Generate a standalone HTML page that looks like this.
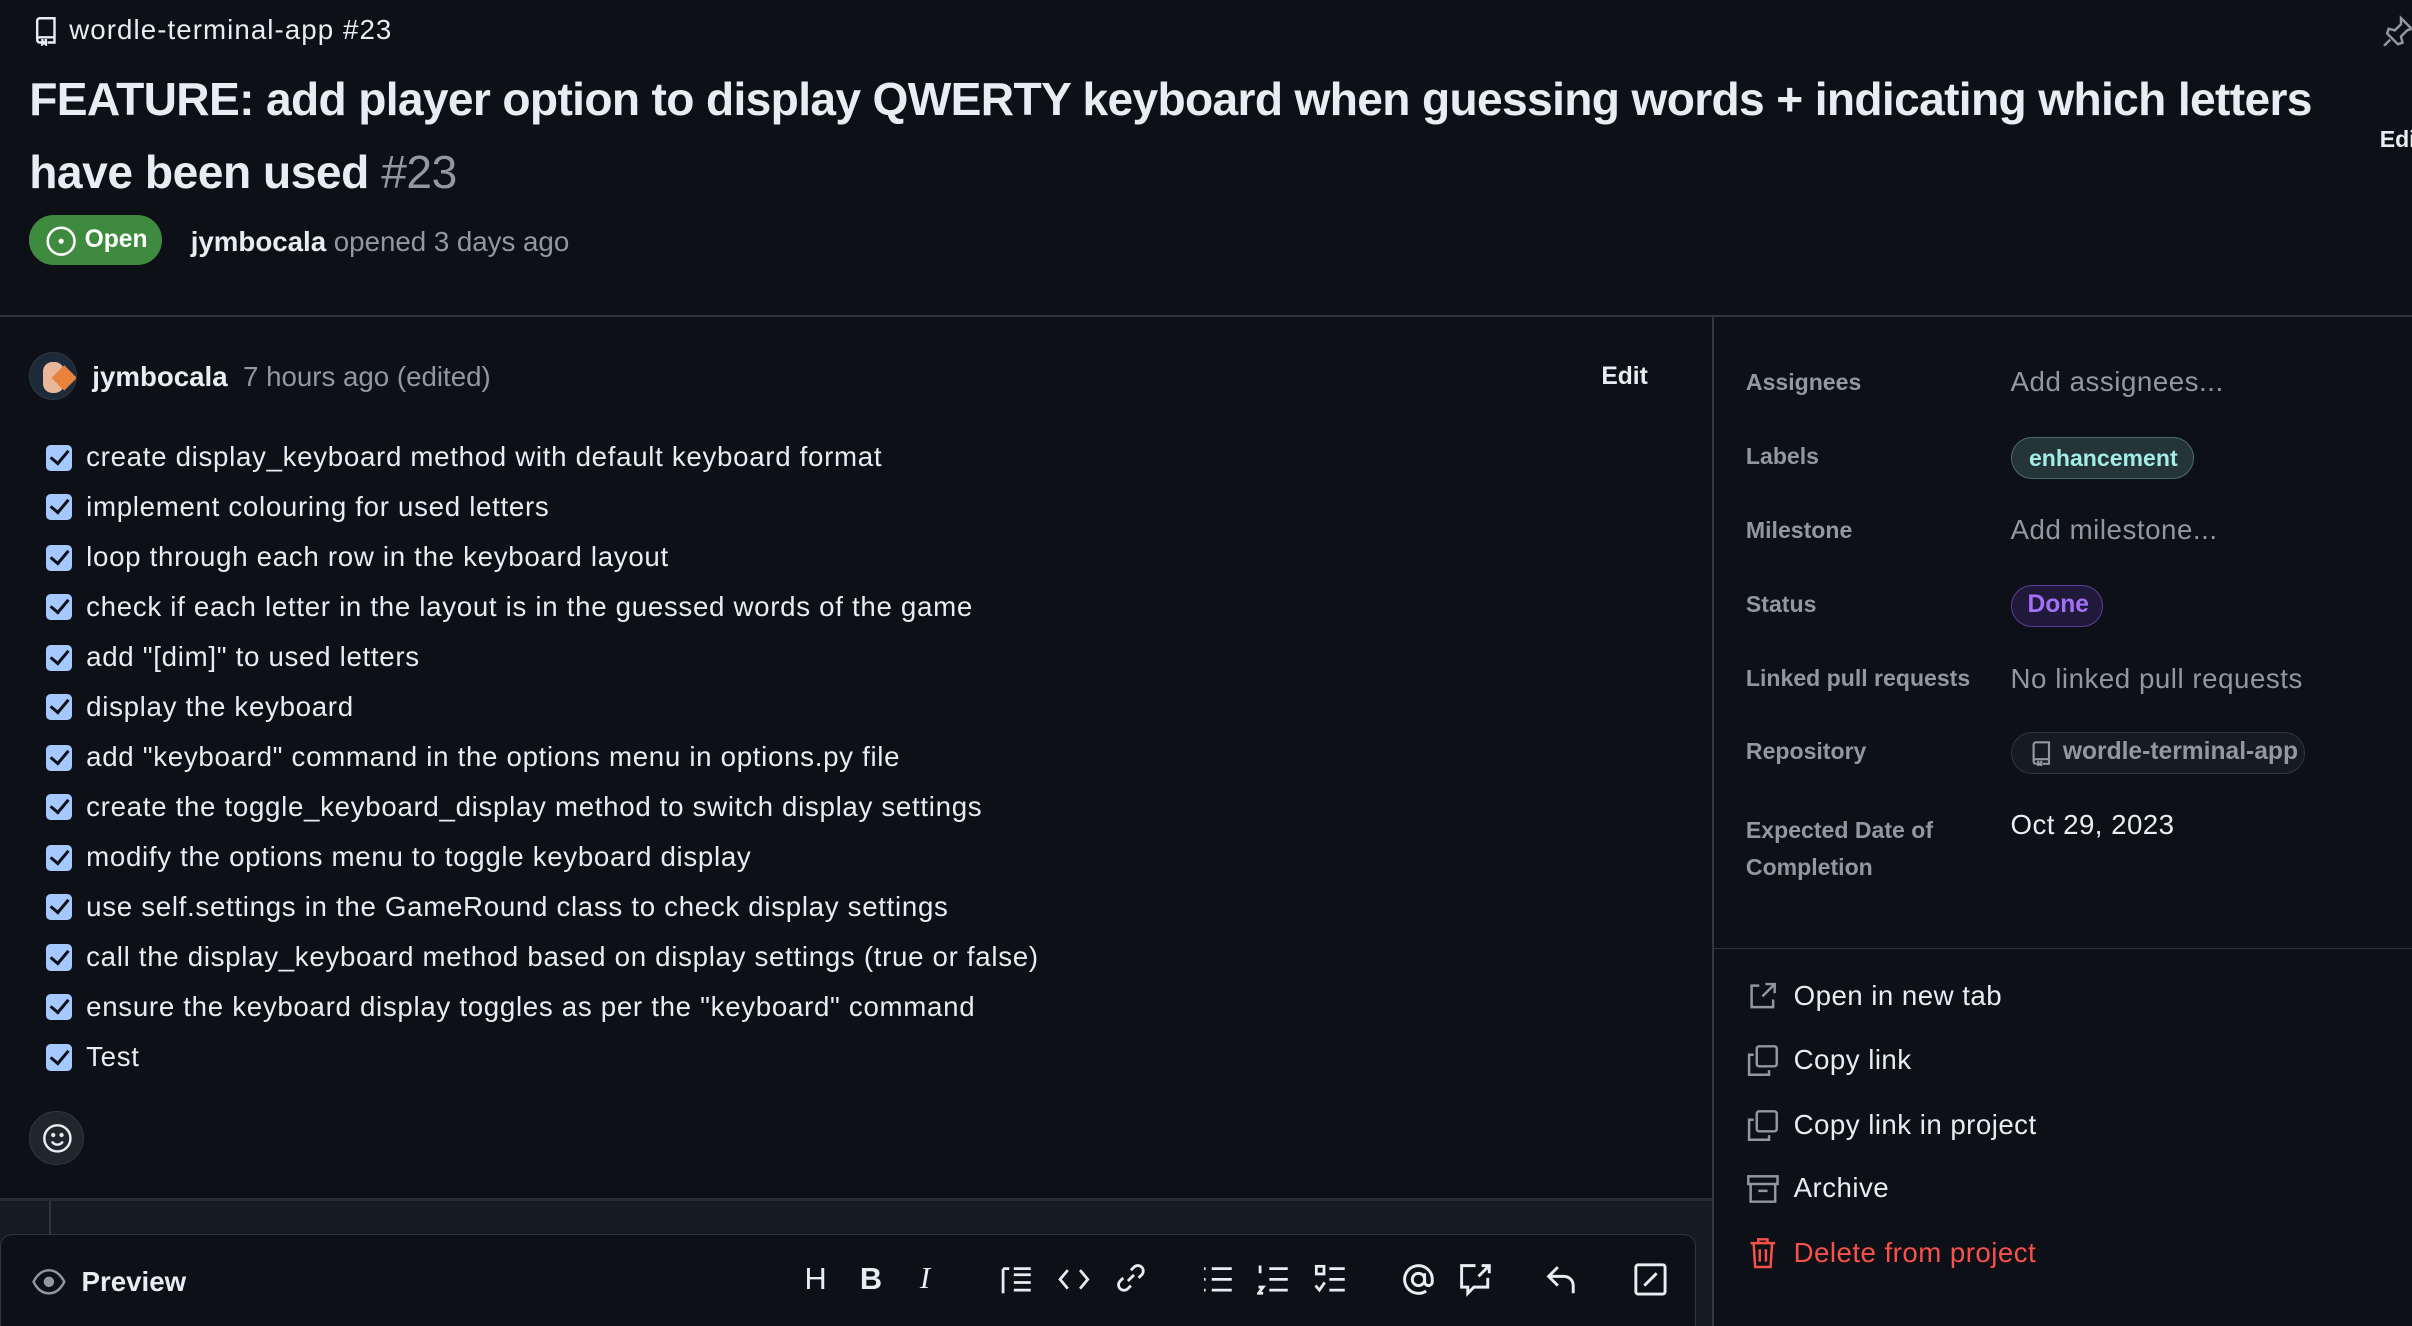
<!DOCTYPE html>
<html><head><meta charset="utf-8"><style>
html,body{margin:0;padding:0;background:#0d1117;overflow:hidden}
body{width:2412px;height:1326px}
#r{zoom:1.53827;width:1568px;height:862px;position:relative;font-family:"Liberation Sans",sans-serif;color:#e6edf3}
.a{position:absolute;white-space:nowrap}
.g{color:#9198a1}
.cb{position:absolute;left:30px;width:17px;height:17px;background:#a5c8ff;border-radius:3px}
.cb:after{content:"";position:absolute;left:5px;top:1px;width:5px;height:10px;border:solid #0d1117;border-width:0 2.5px 2.5px 0;transform:rotate(40deg)}
.li{position:absolute;left:56px;font-size:18px;letter-spacing:0.45px;white-space:nowrap}
.sl{position:absolute;left:1135px;font-size:15px;font-weight:bold;color:#9198a1}
.sv{position:absolute;left:1307px;font-size:18px;color:#9198a1;letter-spacing:0.35px}
.act{position:absolute;left:1166px;font-size:18px;letter-spacing:0.3px}
svg{position:absolute}
</style></head><body><div id="r">
<svg style="left:21px;top:10px" width="18" height="20" viewBox="0 0 16 16" fill="none" stroke="#e6edf3" stroke-width="1.4"><path d="M3 13V2.5A1.5 1.5 0 0 1 4.5 1H13v11H4.5A1.5 1.5 0 0 0 3 13.5 1.5 1.5 0 0 0 4.5 15H6M9 15h4v-3M6 13v3l1-1 1 1v-3"/></svg>
<div class="a" style="left:45px;top:9px;font-size:18px;letter-spacing:0.7px">wordle-terminal-app #23</div>
<div class="a" style="left:19px;top:47px;font-size:30px;font-weight:bold;letter-spacing:-0.42px">FEATURE: add player option to display QWERTY keyboard when guessing words + indicating which letters</div>
<div class="a" style="left:19px;top:94px;font-size:30px;font-weight:bold;letter-spacing:-0.3px">have been used <span class="g" style="font-weight:normal">#23</span></div>
<div class="a" style="left:19px;top:140px;width:86px;height:32px;background:#3e8a3f;border-radius:16px"></div>
<svg style="left:29px;top:146px" width="21" height="21" viewBox="0 0 20 20"><circle cx="10" cy="10" r="8.3" fill="none" stroke="#fff" stroke-width="1.6"/><circle cx="10" cy="10" r="1.6" fill="#fff"/></svg>
<div class="a" style="left:55px;top:147px;font-size:16px;font-weight:bold;color:#fff">Open</div>
<div class="a" style="left:124px;top:147px;font-size:18px"><b>jymbocala</b> <span class="g">opened 3 days ago</span></div>
<div class="a" style="left:0;top:205px;width:1568px;height:1px;background:#30363d"></div>
<div class="a" style="left:1113px;top:205px;width:1px;height:657px;background:#30363d"></div>
<div class="a" style="left:1113px;top:616px;width:455px;height:1px;background:#30363d"></div>
<div class="a" style="left:19px;top:229px;width:30px;height:30px;border-radius:50%;background:#1d2a3a;border:1px solid #30363d;overflow:hidden"><div style="position:absolute;left:8px;top:6px;width:14px;height:20px;background:#e9b89a;border-radius:6px"></div><div style="position:absolute;left:16px;top:10px;width:12px;height:12px;background:#e9823a;transform:rotate(45deg)"></div></div>
<div class="a" style="left:60px;top:235px;font-size:18px"><b>jymbocala</b> <span class="g">&nbsp;7 hours ago (edited)</span></div>
<div class="a" style="left:1041px;top:236px;font-size:16px;font-weight:bold">Edit</div>
<div class="cb" style="top:289px"></div><div class="li" style="top:287px">create display_keyboard method with default keyboard format</div>
<div class="cb" style="top:321px"></div><div class="li" style="top:319px">implement colouring for used letters</div>
<div class="cb" style="top:354px"></div><div class="li" style="top:352px">loop through each row in the keyboard layout</div>
<div class="cb" style="top:386px"></div><div class="li" style="top:384px">check if each letter in the layout is in the guessed words of the game</div>
<div class="cb" style="top:419px"></div><div class="li" style="top:417px">add "[dim]" to used letters</div>
<div class="cb" style="top:451px"></div><div class="li" style="top:449px">display the keyboard</div>
<div class="cb" style="top:484px"></div><div class="li" style="top:482px">add "keyboard" command in the options menu in options.py file</div>
<div class="cb" style="top:516px"></div><div class="li" style="top:514px">create the toggle_keyboard_display method to switch display settings</div>
<div class="cb" style="top:549px"></div><div class="li" style="top:547px">modify the options menu to toggle keyboard display</div>
<div class="cb" style="top:581px"></div><div class="li" style="top:579px">use self.settings in the GameRound class to check display settings</div>
<div class="cb" style="top:614px"></div><div class="li" style="top:612px">call the display_keyboard method based on display settings (true or false)</div>
<div class="cb" style="top:646px"></div><div class="li" style="top:644px">ensure the keyboard display toggles as per the "keyboard" command</div>
<div class="cb" style="top:679px"></div><div class="li" style="top:677px">Test</div>
<div class="a" style="left:19px;top:722px;width:34px;height:34px;border-radius:50%;background:#21262d;border:1px solid #30363d"></div>
<svg style="left:27px;top:730px" width="20" height="20" viewBox="0 0 20 20" fill="none" stroke="#e6edf3" stroke-width="1.6"><circle cx="10" cy="10" r="8.5"/><path d="M6.5 12a4 4 0 0 0 7 0"/><circle cx="7.3" cy="7.8" r=".6" fill="#e6edf3"/><circle cx="12.7" cy="7.8" r=".6" fill="#e6edf3"/></svg>
<div class="a" style="left:0;top:779px;width:1113px;height:83px;background:#151b23;border-top:2px solid #262c34"></div>
<div class="a" style="left:32px;top:781px;width:1px;height:22px;background:#30363d"></div>
<div class="a" style="left:0;top:802px;width:1101px;height:70px;background:#0d1117;border:1px solid #30363d;border-radius:8px 8px 0 0"></div>
<svg style="left:21px;top:824px" width="22" height="18" viewBox="0 0 22 18" fill="none" stroke="#9198a1" stroke-width="1.6"><path d="M1 9C4 3 8 1.5 11 1.5S18 3 21 9C18 15 14 16.5 11 16.5S4 15 1 9Z"/><circle cx="11" cy="9" r="2.6" fill="#9198a1"/></svg>
<div class="a" style="left:53px;top:823px;font-size:18px;font-weight:bold">Preview</div>
<div class="a" style="left:523px;top:820px;font-size:20px;color:#e6edf3">H</div>
<div class="a" style="left:559px;top:820px;font-size:20px;font-weight:bold">B</div>
<div class="a" style="left:598px;top:820px;font-size:20px;font-style:italic;font-family:'Liberation Serif',serif">I</div>
<svg style="left:650px;top:822px" width="22" height="20" viewBox="0 0 22 20" fill="none" stroke="#e6edf3" stroke-width="1.8"><path d="M2 3v16M2 3h4M9 7h11M9 12h11M9 17h11M9 3h11"/></svg>
<svg style="left:687px;top:822px" width="22" height="20" viewBox="0 0 22 20" fill="none" stroke="#e6edf3" stroke-width="1.8"><path d="M7 4 2 10l5 6M15 4l5 6-5 6"/></svg>
<svg style="left:724px;top:820px" width="22" height="22" viewBox="0 0 22 22" fill="none" stroke="#e6edf3" stroke-width="1.8"><path d="M9 13l4-4M11 6l2-2a3.5 3.5 0 0 1 5 5l-2 2M11 16l-2 2a3.5 3.5 0 0 1-5-5l2-2"/></svg>
<svg style="left:781px;top:822px" width="22" height="20" viewBox="0 0 22 20" fill="none" stroke="#e6edf3" stroke-width="1.8"><path d="M7 3h13M7 10h13M7 17h13M2 3h1M2 10h1M2 17h1"/></svg>
<svg style="left:817px;top:822px" width="22" height="20" viewBox="0 0 22 20" fill="none" stroke="#e6edf3" stroke-width="1.8"><path d="M8 3h12M8 10h12M8 17h12M2 1v5M1 15h3l-3 4h3"/></svg>
<svg style="left:854px;top:822px" width="22" height="20" viewBox="0 0 22 20" fill="none" stroke="#e6edf3" stroke-width="1.8"><rect x="1.5" y="1.5" width="5" height="5"/><path d="M10 3h10M10 10h10M10 17h10M1 14l2.5 3L7 12"/></svg>
<svg style="left:910px;top:820px" width="24" height="24" viewBox="0 0 24 24" fill="none" stroke="#e6edf3" stroke-width="1.9"><circle cx="12" cy="12" r="4"/><path d="M16 8v5.5a2.5 2.5 0 0 0 5 0V12a9 9 0 1 0-4 7.5"/></svg>
<svg style="left:947px;top:820px" width="24" height="24" viewBox="0 0 24 24" fill="none" stroke="#e6edf3" stroke-width="1.9"><path d="M12 3H3v14h4v4l4-4h9v-6M14 10l7-7M16 3h5v5"/></svg>
<svg style="left:1004px;top:820px" width="24" height="24" viewBox="0 0 24 24" fill="none" stroke="#e6edf3" stroke-width="1.9"><path d="M9 4 3 10l6 6M3 10h10a6 6 0 0 1 6 6v5"/></svg>
<svg style="left:1061px;top:820px" width="24" height="24" viewBox="0 0 24 24" fill="none" stroke="#e6edf3" stroke-width="1.9"><rect x="2.5" y="2.5" width="19" height="19" rx="1.5"/><path d="M8 16 16 8"/></svg>
<div class="sl" style="top:240px">Assignees</div><div class="sv" style="top:238px">Add assignees...</div>
<div class="sl" style="top:288px">Labels</div>
<div class="a" style="left:1307px;top:284px;width:118px;height:26px;border-radius:14px;background:#253437;border:1px solid #4d6a6a"></div>
<div class="a" style="left:1319px;top:289px;font-size:15px;font-weight:bold;color:#a2ede6">enhancement</div>
<div class="sl" style="top:336px">Milestone</div><div class="sv" style="top:334px">Add milestone...</div>
<div class="sl" style="top:384px">Status</div>
<div class="a" style="left:1307px;top:380px;width:59px;height:26px;border-radius:14px;background:#21193a;border:1px solid #5a3f9a"></div>
<div class="a" style="left:1318px;top:384px;font-size:16px;font-weight:bold;color:#a371f7">Done</div>
<div class="sl" style="top:432px">Linked pull requests</div><div class="sv" style="top:431px">No linked pull requests</div>
<div class="sl" style="top:480px">Repository</div>
<div class="a" style="left:1307px;top:476px;width:190px;height:26px;border-radius:14px;background:#161b22;border:1px solid #30363d"></div>
<svg style="left:1319px;top:481px" width="16" height="17" viewBox="0 0 16 16" fill="none" stroke="#9198a1" stroke-width="1.4"><path d="M3 13V2.5A1.5 1.5 0 0 1 4.5 1H13v11H4.5A1.5 1.5 0 0 0 3 13.5 1.5 1.5 0 0 0 4.5 15H6M9 15h4v-3M6 13v3l1-1 1 1v-3"/></svg>
<div class="a" style="left:1341px;top:480px;font-size:16px;font-weight:bold;color:#9198a1">wordle-terminal-app</div>
<div class="sl" style="top:528px;line-height:24px">Expected Date of<br>Completion</div>
<div class="a" style="left:1307px;top:526px;font-size:18px;letter-spacing:0.3px">Oct 29, 2023</div>
<svg style="left:1136px;top:638px" width="20" height="20" viewBox="0 0 20 20" fill="none" stroke="#9198a1" stroke-width="1.6"><path d="M8 3H3v14h14v-5M12 2h6v6M18 2l-8 8"/></svg>
<div class="act" style="top:637px">Open in new tab</div>
<svg style="left:1135px;top:679px" width="22" height="22" viewBox="0 0 22 22" fill="none" stroke="#9198a1" stroke-width="1.6"><rect x="7" y="1.5" width="13" height="13" rx="1.5"/><path d="M5 7H2v13h13v-3"/></svg>
<div class="act" style="top:679px">Copy link</div>
<svg style="left:1135px;top:721px" width="22" height="22" viewBox="0 0 22 22" fill="none" stroke="#9198a1" stroke-width="1.6"><rect x="7" y="1.5" width="13" height="13" rx="1.5"/><path d="M5 7H2v13h13v-3"/></svg>
<div class="act" style="top:721px">Copy link in project</div>
<svg style="left:1135px;top:763px" width="22" height="20" viewBox="0 0 22 20" fill="none" stroke="#9198a1" stroke-width="1.6"><rect x="1.5" y="1.5" width="19" height="5"/><path d="M3 7v11h16V7M8 11h6"/></svg>
<div class="act" style="top:762px">Archive</div>
<svg style="left:1137px;top:804px" width="18" height="21" viewBox="0 0 18 21" fill="none" stroke="#f85149" stroke-width="1.6"><path d="M1 4h16M6 4V1.5h6V4M3 4l1 15.5h10L15 4M7 8v8M11 8v8"/></svg>
<div class="act" style="top:804px;color:#f85149">Delete from project</div>
<svg style="left:1548px;top:10px" width="22" height="22" viewBox="0 0 22 22" fill="none" stroke="#9198a1" stroke-width="1.6"><path d="M13 2l7 7-3 1-4 4 1 4-3 1-7-7 1-3 4 1 4-4z M6 16l-4 4"/></svg>
<div class="a" style="left:1547px;top:82px;font-size:15px;font-weight:bold">Edit</div>
</div></body></html>
